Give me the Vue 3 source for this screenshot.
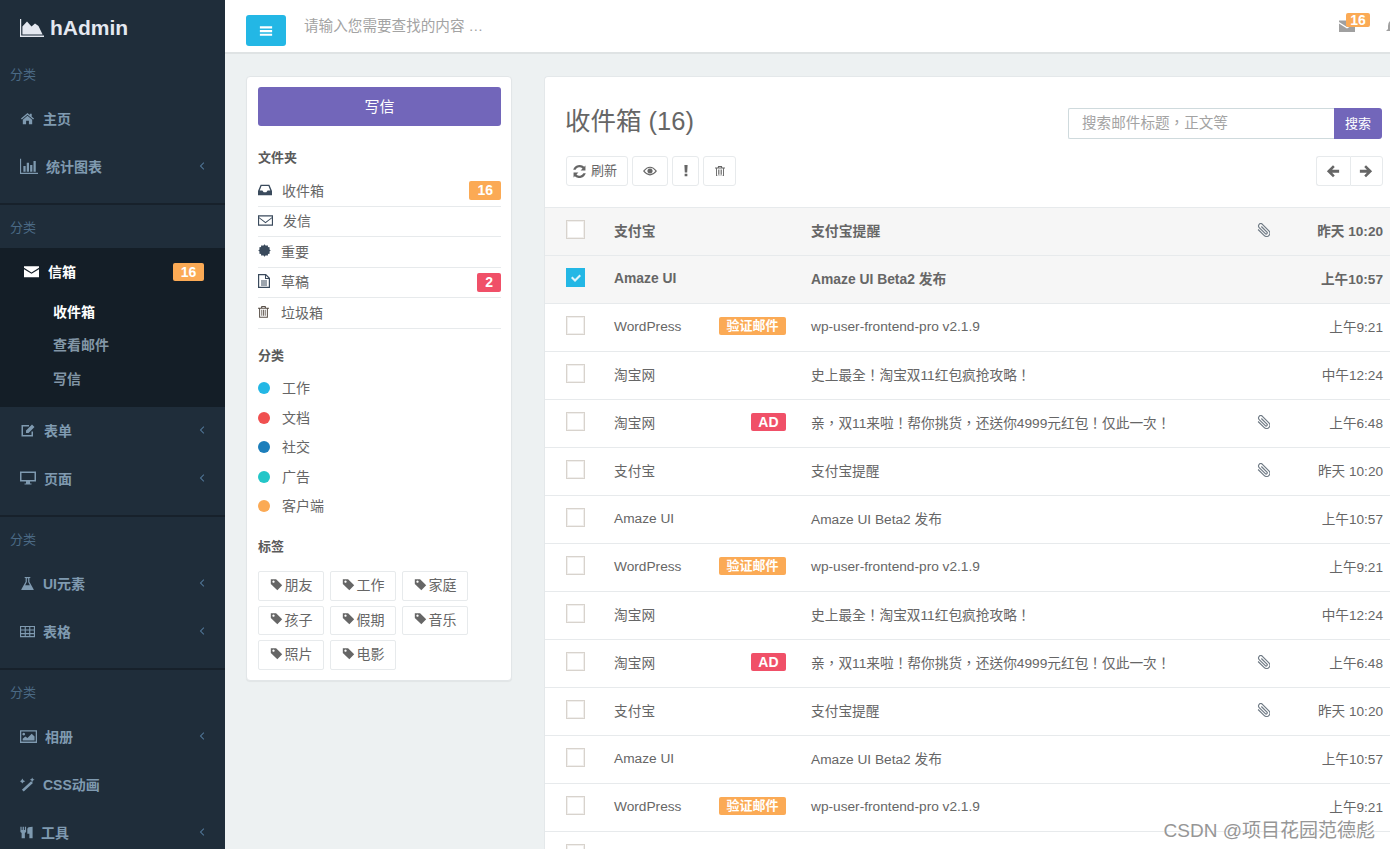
<script setup>
import { h } from 'vue'

// 證書圖示的鋸齒外框
const burst = () => {
  let d = ''
  for (let i = 0; i < 24; i++) {
    const r = i % 2 ? 6.2 : 7.6
    const a = (i / 24) * Math.PI * 2
    d += `${i ? 'L' : 'M'}${(8 + r * Math.cos(a)).toFixed(2)} ${(8 + r * Math.sin(a)).toFixed(2)}`
  }
  return d + 'Z'
}

const icons = {
  logo: { vb: '0 0 24 18', d: 'M0 0H1.2V16.6H24V18H0Z M2.4 15.6V7.5L7 2.5L11.5 7.5L15 4.5L18.5 7L22.6 15.6Z' },
  home: { d: 'M8 2L1 8L2 9L8 4L14 9L15 8L12.5 6V3H10.5V4.2Z M8 5L3 9.3V14H6.5V10.5H9.5V14H13V9.3Z' },
  chart: { d: 'M0 1.5H1V14H16V15H0Z M3 8H5V13H3Z M6 5H8V13H6Z M9 7H11V13H9Z M12 3.5H14V13H12Z' },
  envelope: { d: 'M0 2.5H16V4L8 9L0 4Z M0 5.5L8 10.5L16 5.5V14H0Z' },
  edit: { d: 'M2 3H9V4.5H3V13H11.5V9.5H13V14.5H1.5V3Z M6 8.5L12 2.5L14.5 5L8.5 11H6Z' },
  desktop: { d: 'M0 1.5H16V11.5H10V13.5H11.5V14.5H4.5V13.5H6V11.5H0Z M1.5 3V10H14.5V3Z' },
  beaker: { d: 'M5 1H11V2H10V6L14.5 14Q15 15 14 15H2Q1 15 1.5 14L6 6V2H5Z M7.3 2.5V6.5L5.5 9.8H10.5L8.7 6.5V2.5Z' },
  table: { d: 'M0 2H16V14H0Z M1.2 3.2V5.9H5V3.2Z M6.2 3.2V5.9H9.8V3.2Z M11 3.2V5.9H14.8V3.2Z M1.2 7V9.7H5V7Z M6.2 7V9.7H9.8V7Z M11 7V9.7H14.8V7Z M1.2 10.8V12.8H5V10.8Z M6.2 10.8V12.8H9.8V10.8Z M11 10.8V12.8H14.8V10.8Z' },
  picture: { d: 'M0 2H16V14H0Z M1.2 3.2V12.8H14.8V3.2Z M3.5 4.5a1.3 1.3 0 1 0 .01 0Z M2.5 11.8V10L5 8L7 9.5L11 5.5L13.7 8V11.8Z' },
  magic: { d: 'M11.8 4.5L13.8 6.5L4 15.5L2 13.5Z M2.5 1.5L3.5 3.5L5.5 4.5L3.5 5.5L2.5 7L1.5 5.5L0 4.5L1.5 3.5Z M13 0.5L13.8 2.2L15.5 3L13.8 3.8L13 5.5L12.2 3.8L10.5 3L12.2 2.2Z' },
  cutlery: { d: 'M0.5 1H2V5H3.2V1H4.8V5H6V1H7.5V7.5L6 8.5V15H2V8.5L0.5 7.5Z M15.5 1V15H11.5V9.5H9V4Q9 1 15.5 1Z' },
  angle: { d: 'M10 3L11 4L7 8L11 12L10 13L5 8Z' },
  bars: { d: 'M1 2.5H15V5H1Z M1 6.8H15V9.3H1Z M1 11H15V13.5H1Z' },
  inbox: { d: 'M3 2H13L16 9V14H0V9Z M4 3.5L2 8.5H5L6.5 10.5H9.5L11 8.5H14L12 3.5Z' },
  envelopeO: { d: 'M0 2.5H16V13.5H0Z M1.2 3.7V12.3H14.8V3.7Z M1.2 4.5L8 9.5L14.8 4.5V5.7L8 10.8L1.2 5.7Z' },
  certificate: { d: burst() },
  file: { vb: '2 1 12 14', d: 'M2 1H10L14 5V15H2Z M3.2 2.2V13.8H12.8V6H9V2.2Z M10 2.7V5H12.3Z M5 7.5H11V8.5H5Z M5 9.5H11V10.5H5Z M5 11.5H11V12.5H5Z' },
  trash: { vb: '1.5 1 13 14', d: 'M5.5 1H10.5L11 3H14.5V4.2H13.2V15H2.8V4.2H1.5V3H5Z M6.7 2.2L6.4 3H9.6L9.3 2.2Z M4 4.2V13.8H12V4.2Z M5.5 5.5H6.5V12.5H5.5Z M7.5 5.5H8.5V12.5H7.5Z M9.5 5.5H10.5V12.5H9.5Z' },
  tag: { d: 'M1 1.5H7.5L15 9L9 15L1 7.5Z M4.3 3a1.4 1.4 0 1 0 .01 0Z' },
  refresh: { vb: '2 2 12 12', d: 'M13.5 2.5V7H9L10.8 5.2A4 4 0 0 0 4.4 6.3H2.2A6.2 6.2 0 0 1 12.3 3.7Z M2.5 13.5V9H7L5.2 10.8A4 4 0 0 0 11.6 9.7H13.8A6.2 6.2 0 0 1 3.7 12.3Z' },
  eye: { d: 'M0 8Q4 3 8 3Q12 3 16 8Q12 13 8 13Q4 13 0 8Z M1.8 8Q4.5 11.8 8 11.8Q11.5 11.8 14.2 8Q11.5 4.2 8 4.2Q4.5 4.2 1.8 8Z M8 5a3 3 0 1 0 .01 0Z' },
  bang: { vb: '5.5 1 5 14', d: 'M6 1H10L9.5 10.5H6.5Z M6.3 12H9.7V15H6.3Z' },
  left: { d: 'M8 1.5L10 3.5L7 6.5H15V9.9H7L10 13L8 15L1 8.2Z' },
  right: { d: 'M8 1.5L6 3.5L9 6.5H1V9.9H9L6 13L8 15L15 8.2Z' },
  clip: { vb: '2 1.5 12 12.5', line: true, d: 'M13 7.5L7.5 13A3 3 0 0 1 3 8.7L9 2.7A2 2 0 0 1 12 5.7L6.3 11.3A1 1 0 0 1 4.8 9.9L10 4.7' },
  bell: { d: 'M8 1A1 1 0 0 1 9 2Q13 3 13 8V11L15 13H1L3 11V8Q3 3 7 2A1 1 0 0 1 8 1Z M6.5 14H9.5A1.5 1.5 0 0 1 6.5 14Z' },
  check: { d: 'M3 8L4.5 6.5L7 9L11.5 4.5L13 6L7 12Z' }
}

// 小圖示元件，name 對應上面的 icons
const Ic = (props) => {
  const icon = icons[props.name]
  const [, , vw, vh] = (icon.vb || '0 0 16 16').split(' ').map(Number)
  const w = props.w || 14
  return h('svg', {
    viewBox: icon.vb || '0 0 16 16',
    width: w,
    height: (w * vh) / vw,
    fill: icon.line ? 'none' : 'currentColor',
    stroke: icon.line ? 'currentColor' : 'none',
    'stroke-width': icon.line ? 1.1 : 0,
    style: 'display:block;flex-shrink:0'
  }, h('path', { d: icon.d, 'fill-rule': 'evenodd' }))
}
Ic.props = ['name', 'w']

const navGroups = [
  { items: [{ icon: 'home', w: 15, text: '主页' }, { icon: 'chart', w: 18, text: '统计图表', arrow: true }] },
  { active: true, items: [{ icon: 'edit', w: 16, text: '表单', arrow: true }, { icon: 'desktop', w: 16, text: '页面', arrow: true }] },
  { items: [{ icon: 'beaker', w: 15, text: 'UI元素', arrow: true }, { icon: 'table', w: 15, text: '表格', arrow: true }] },
  { last: true, items: [{ icon: 'picture', w: 17, text: '相册', arrow: true }, { icon: 'magic', w: 15, text: 'CSS动画' }, { icon: 'cutlery', w: 13, text: '工具', arrow: true }] }
]

const subMenu = ['收件箱', '查看邮件', '写信']

const folders = [
  { icon: 'inbox', w: 14, text: '收件箱', x: 24, badge: '16', cls: 'orange' },
  { icon: 'envelopeO', w: 15, text: '发信', x: 25 },
  { icon: 'certificate', w: 13, text: '重要', x: 23 },
  { icon: 'file', w: 12, text: '草稿', x: 23, badge: '2', cls: 'red' },
  { icon: 'trash', w: 11, text: '垃圾箱', x: 23 }
]

const cats = [
  { text: '工作', color: '#23b7e5' },
  { text: '文档', color: '#f05050' },
  { text: '社交', color: '#1c7ebb' },
  { text: '广告', color: '#23c6c8' },
  { text: '客户端', color: '#fbaa55' }
]

const tags = ['朋友', '工作', '家庭', '孩子', '假期', '音乐', '照片', '电影']

// lead：這個字要用簡體字形，其餘部分的標點要置中
const mailTypes = [
  { from: '支付宝', subject: '支付宝提醒', clip: true, time: '昨天 10:20' },
  { from: 'Amaze UI', subject: 'Amaze UI Beta2 发布', time: '上午10:57' },
  { from: 'WordPress', label: '验证邮件', cls: 'orange', subject: 'wp-user-frontend-pro v2.1.9', time: '上午9:21' },
  { from: '淘宝网', subject: '史上最全！淘宝双11红包疯抢攻略！', time: '中午12:24' },
  { from: '淘宝网', label: 'AD', cls: 'red', lead: '亲', subject: '，双11来啦！帮你挑货，还送你4999元红包！仅此一次！', clip: true, time: '上午6:48' }
]
const mails = Array.from({ length: 13 }, (_, i) => mailTypes[i % 5])
</script>

<template>
  <div class="page">
    <aside class="side">
      <div class="logo"><Ic name="logo" :w="24" /><span>hAdmin</span></div>

      <template v-for="(g, gi) in navGroups" :key="gi">
        <div class="side-label">分类</div>
        <div v-if="g.active" class="mail-nav">
          <div class="nav-item on">
            <Ic name="envelope" :w="15" /><span>信箱</span><b class="side-badge">16</b>
          </div>
          <div v-for="(s, si) in subMenu" :key="s" class="sub-item" :class="{ on: si === 0 }">{{ s }}</div>
        </div>
        <div class="nav-group" :class="{ last: g.last }">
          <div v-for="item in g.items" :key="item.text" class="nav-item">
            <Ic :name="item.icon" :w="item.w" /><span>{{ item.text }}</span>
            <Ic v-if="item.arrow" class="arrow" name="angle" :w="12" />
          </div>
        </div>
      </template>
    </aside>

    <div class="right">
      <header class="top">
        <button class="menu-btn"><Ic name="bars" :w="14" /></button>
        <input class="top-search" placeholder="请输入您需要查找的内容 …">
        <div class="top-icons">
          <div class="top-mail">
            <Ic name="envelope" :w="16" />
            <b class="top-badge">16</b>
          </div>
          <Ic class="top-bell" name="bell" :w="16" />
        </div>
      </header>

      <div class="content">
        <section class="folder-card">
          <button class="write-btn">写信</button>

          <h5 class="folder-title">文件夹</h5>
          <ul class="folders">
            <li v-for="f in folders" :key="f.text">
              <Ic :name="f.icon" :w="f.w" /><span :style="{ marginLeft: (f.x - f.w) + 'px' }">{{ f.text }}</span>
              <b v-if="f.badge" class="count" :class="f.cls">{{ f.badge }}</b>
            </li>
          </ul>

          <h5 class="cat-title">分类</h5>
          <ul class="cats">
            <li v-for="c in cats" :key="c.text">
              <i class="dot" :style="{ background: c.color }"></i>{{ c.text }}
            </li>
          </ul>

          <h5 class="tag-title">标签</h5>
          <div class="tags">
            <a v-for="t in tags" :key="t" class="tag"><Ic name="tag" :w="13" />{{ t }}</a>
          </div>
        </section>

        <section class="inbox">
          <div class="inbox-head">
            <h2>收件箱 (16)</h2>
            <div class="search">
              <input placeholder="搜索邮件标题，正文等">
              <button>搜索</button>
            </div>
          </div>

          <div class="toolbar">
            <div class="tools">
              <button class="tool refresh"><Ic name="refresh" :w="13" /><span>刷新</span></button>
              <button class="tool eye"><Ic name="eye" :w="14" /></button>
              <button class="tool bang"><Ic name="bang" :w="4" /></button>
              <button class="tool bin"><Ic name="trash" :w="10" /></button>
            </div>
            <div class="pager">
              <button><Ic name="left" :w="14" /></button>
              <button><Ic name="right" :w="14" /></button>
            </div>
          </div>

          <div class="mail-list">
            <div v-for="(m, i) in mails" :key="i" class="mail" :class="{ unread: i < 2 }">
              <span class="box" :class="{ checked: i === 1 }"><Ic v-if="i === 1" name="check" :w="16" /></span>
              <div class="from">
                <span>{{ m.from }}</span>
                <b v-if="m.label" class="mail-label" :class="m.cls">{{ m.label }}</b>
              </div>
              <div class="subject"><span v-if="m.lead" class="sc">{{ m.lead }}</span>{{ m.subject }}</div>
              <Ic v-if="m.clip" class="clip" name="clip" :w="13" />
              <span v-else></span>
              <div class="time">{{ m.time }}</div>
            </div>
            <!-- 最後一列只露出勾選框 -->
            <div class="mail"><span class="box"></span></div>
          </div>
        </section>
      </div>
    </div>

    <div class="watermark">CSDN @项目花园范德彪</div>
  </div>
</template>

<style scoped>
.page {
  display: flex;
  width: 1390px;
  height: 849px;
  overflow: hidden;
  position: relative;
  background: #edf1f2;
  color: #666;
  font-family: "Liberation Sans", "Noto Sans CJK SC", sans-serif;
  font-size: 14px;
}

/* 側邊欄 */
.side {
  width: 225px;
  flex-shrink: 0;
  background: #1f2d3a;
  color: #7f9ab0;
}
.logo {
  height: 52px;
  display: flex;
  align-items: center;
  gap: 6px;
  padding: 4px 0 0 20px;
  box-sizing: border-box;
  color: #e4e8f0;
  font-size: 21px;
  font-weight: 700;
}
.side-label {
  height: 43px;
  line-height: 45px;
  padding-left: 10px;
  font-size: 13px;
  color: #4b6a85;
}
.nav-group {
  padding-bottom: 12px;
  border-bottom: 2px solid #17212b;
}
.nav-group.last {
  border-bottom: none;
}
.nav-item {
  height: 48px;
  box-sizing: border-box;
  display: flex;
  align-items: center;
  gap: 8px;
  padding: 0 21px 2px 20px;
  font-weight: 700;
}
.nav-item .arrow {
  margin-left: auto;
  margin-right: -4px;
  color: #4f7394;
}
.mail-nav {
  height: 159px;
  background: #141e27;
}
.mail-nav .nav-item {
  padding-left: 24px;
  gap: 9px;
  color: #fff;
}
.side-badge {
  margin-left: auto;
  margin-top: 2px;
  width: 31px;
  height: 18px;
  line-height: 18px;
  text-align: center;
  background: #fbaa55;
  border-radius: 2px;
  color: #fff;
}
.sub-item {
  height: 33.33px;
  line-height: 33px;
  padding-left: 53px;
  font-weight: 700;
  color: #8296a6;
}
.sub-item.on {
  color: #fff;
}

/* 頂部 */
.right {
  flex: 1;
  min-width: 0;
}
.top {
  height: 52px;
  display: flex;
  align-items: center;
  background: #fff;
  border-bottom: 2px solid #dfe3e4;
  padding-left: 21px;
}
.menu-btn {
  width: 40px;
  height: 31px;
  margin-top: 9px;
  display: flex;
  align-items: center;
  justify-content: center;
  border: none;
  border-radius: 3px;
  background: #23b7e5;
  color: #fff;
  padding: 0;
}
.top-search {
  width: 400px;
  margin-left: 18px;
  border: none;
  outline: none;
  padding: 0;
  font: inherit;
  font-size: 14.6px;
}
.top-search::placeholder,
.search input::placeholder {
  color: #a3a3a3;
  opacity: 1;
}
.top-icons {
  margin-left: auto;
  display: flex;
  align-items: center;
  color: #a0a0a0;
}
.top-mail {
  position: relative;
}
.top-badge {
  position: absolute;
  left: 7px;
  top: -5px;
  width: 24px;
  height: 14px;
  line-height: 14px;
  text-align: center;
  background: #fbaa55;
  border-radius: 2px;
  color: #fff;
  font-size: 14px;
}
.top-bell {
  margin-left: 30px;
  margin-right: -11px;
}

/* 內容 */
.content {
  display: flex;
  align-items: flex-start;
  gap: 32px;
  padding: 22px 0 0 21px;
}
.folder-card {
  width: 266px;
  box-sizing: border-box;
  flex-shrink: 0;
  padding: 10px 10px 10px 11px;
  background: #fff;
  border: 1px solid #e2e6e8;
  border-radius: 4px;
  box-shadow: 0 1px 1px rgba(0, 0, 0, 0.05);
}
.write-btn {
  display: block;
  width: 100%;
  height: 39px;
  border: none;
  border-radius: 3px;
  background: #7266ba;
  color: #fff;
  font: inherit;
  font-size: 15px;
  padding: 0 0 3px;
}
h5 {
  margin: 0;
  height: 20px;
  line-height: 20px;
  font-size: 13px;
  font-weight: 700;
  color: #5a5a5a;
}
.folder-title {
  margin: 22px 0 8px;
}
.cat-title {
  margin: 17px 0 8px;
}
.tag-title {
  margin: 16px 0 14px;
}
ul {
  list-style: none;
  margin: 0;
  padding: 0;
}
.folders li {
  height: 30.5px;
  box-sizing: border-box;
  display: flex;
  align-items: center;
  padding-bottom: 2px;
  border-bottom: 1px solid #e7eaec;
  color: #666;
}
.folders li svg {
  color: #3a4a5c;
}
.folders li:last-child svg {
  color: #5a5048;
}
.count {
  margin-left: auto;
  margin-top: 2px;
  height: 19px;
  line-height: 19px;
  padding: 0 8px;
  border-radius: 2px;
  color: #fff;
}
.orange {
  background: #fbaa55;
}
.red {
  background: #f05068;
}
.cats li {
  height: 29.5px;
  box-sizing: border-box;
  display: flex;
  align-items: center;
  padding-bottom: 2px;
}
.dot {
  width: 12px;
  height: 12px;
  border-radius: 50%;
  margin-right: 12px;
  margin-top: 2px;
}
.tags {
  display: grid;
  grid-template-columns: repeat(3, 66px);
  grid-auto-rows: 29.5px;
  gap: 5px 6px;
}
.tag {
  display: flex;
  align-items: center;
  justify-content: center;
  gap: 2px;
  box-sizing: border-box;
  padding-bottom: 3px;
  border: 1px solid #e7eaec;
  border-radius: 2px;
  color: #666;
}

/* 收件箱 */
.inbox {
  flex: 1;
  min-width: 0;
  height: 800px;
  background: #fff;
  border: 1px solid #e4e8ea;
  border-right: none;
  border-radius: 4px 0 0 0;
}
.inbox-head {
  display: flex;
  justify-content: space-between;
  align-items: flex-start;
  padding: 31px 8px 0 21px;
}
.inbox-head h2 {
  margin: -2px 0 0 -1px;
  font-size: 25.5px;
  line-height: 31px;
  font-weight: 400;
  color: #666;
}
.search {
  display: flex;
  width: 314px;
  height: 31px;
}
.search input {
  flex: 1;
  min-width: 0;
  box-sizing: border-box;
  border: 1px solid #cfdadd;
  border-right: none;
  border-radius: 2px 0 0 2px;
  padding: 0 13px 2px;
  font: inherit;
  font-family: "Liberation Sans", "Noto Sans CJK TC", sans-serif;
  font-size: 14.6px;
  outline: none;
}
.search button {
  width: 48px;
  border: none;
  border-radius: 0 3px 3px 0;
  background: #7266ba;
  color: #fff;
  font: inherit;
  font-size: 13px;
  padding: 0 0 2px;
}
.toolbar {
  display: flex;
  justify-content: space-between;
  margin-top: 17px;
  padding: 0 7px 0 21px;
}
.tools {
  display: flex;
  gap: 4px;
}
button {
  font-family: inherit;
}
.tool,
.pager button {
  height: 30px;
  display: flex;
  align-items: center;
  justify-content: center;
  background: #fff;
  color: #666;
  padding: 0;
  border: 1px solid #e7eaec;
  border-radius: 3px;
  font-size: 13px;
}
.refresh {
  width: 62px;
  gap: 5px;
  padding-right: 4px;
}
.refresh span {
  margin-bottom: 3px;
}
.eye {
  width: 36px;
}
.bang {
  width: 27px;
}
.bin {
  width: 33px;
}
.pager {
  display: flex;
}
.pager button {
  width: 33.5px;
}
.pager button:first-child {
  border-right: none;
  border-radius: 3px 0 0 3px;
}
.pager button:last-child {
  border-radius: 0 3px 3px 0;
}
.mail-list {
  margin-top: 21px;
  border-top: 1px solid #e7eaec;
}
.mail {
  height: 48px;
  box-sizing: border-box;
  display: grid;
  grid-template-columns: 48px 172px 1fr 12px 114px;
  align-items: center;
  padding: 0 7px 3px 21px;
  border-bottom: 1px solid #e7eaec;
  font-size: 13.7px;
}
.mail.unread {
  background: #f6f6f6;
  font-weight: 700;
  font-size: 13.85px;
}
.box {
  width: 19px;
  height: 19px;
  box-sizing: border-box;
  margin-bottom: 1px;
  border: 1px solid #d8d3cd;
  box-shadow: inset 0 0 0 1px #f1efed;
  background: #fff;
  display: flex;
  align-items: center;
  justify-content: center;
  color: rgba(255, 255, 255, 0.85);
}
.box.checked {
  background: #23b7e5;
  border-color: #23b7e5;
  box-shadow: none;
}
.from {
  display: flex;
  justify-content: space-between;
  align-items: center;
}
.mail-label {
  height: 18px;
  line-height: 18px;
  padding: 0 7.5px;
  border-radius: 2px;
  color: #fff;
  font-size: 13px;
}
.mail-label.red {
  font-size: 14px;
}
.subject {
  padding-left: 25px;
  font-family: "Liberation Sans", "Noto Sans CJK TC", sans-serif;
  white-space: nowrap;
}
.sc {
  font-family: "Liberation Sans", "Noto Sans CJK SC", sans-serif;
}
.clip {
  color: #6f7a85;
  transform: scaleX(-1);
}
.time {
  text-align: right;
  font-size: 13.6px;
}

.watermark {
  position: absolute;
  right: 15px;
  bottom: 6px;
  font-size: 19px;
  line-height: 24px;
  color: #969696;
  text-shadow: 0 0 2px #fff;
}
</style>

<style>
html, body {
  margin: 0;
  overflow: hidden;
}
</style>
